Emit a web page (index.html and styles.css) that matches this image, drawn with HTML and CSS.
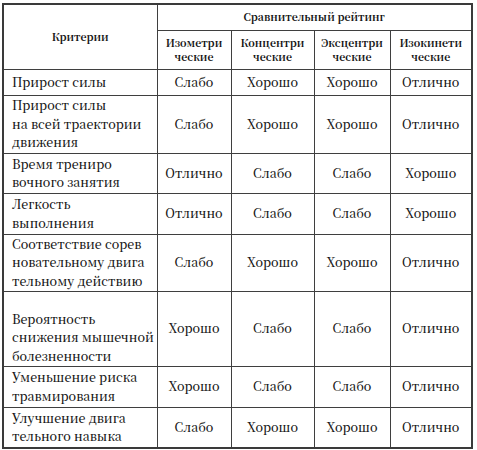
FILE: index.html
```html
<!DOCTYPE html>
<html lang="ru">
<head>
<meta charset="utf-8">
<link rel="stylesheet" href="styles.css">
</head>
<body>
<table class="rating">
  <colgroup>
    <col class="c-crit">
    <col class="c-iso">
    <col class="c-con">
    <col class="c-exc">
    <col class="c-kin">
  </colgroup>
  <thead>
    <tr class="r-top">
      <th rowspan="2" class="crit-head">Критерии</th>
      <th colspan="4" class="group-head">Сравнительный рейтинг</th>
    </tr>
    <tr class="r-sub">
      <th>Изометри<br>ческие</th>
      <th>Концентри<br>ческие</th>
      <th>Эксцентри<br>ческие</th>
      <th>Изокинети<br>ческие</th>
    </tr>
  </thead>
  <tbody>
    <tr class="r1">
      <td class="crit">Прирост силы</td>
      <td>Слабо</td><td>Хорошо</td><td>Хорошо</td><td>Отлично</td>
    </tr>
    <tr class="r3">
      <td class="crit">Прирост силы<br>на всей траектории<br>движения</td>
      <td>Слабо</td><td>Хорошо</td><td>Хорошо</td><td>Отлично</td>
    </tr>
    <tr class="r2">
      <td class="crit">Время трениро<br>вочного занятия</td>
      <td>Отлично</td><td>Слабо</td><td>Слабо</td><td>Хорошо</td>
    </tr>
    <tr class="r2b">
      <td class="crit">Легкость<br>выполнения</td>
      <td>Отлично</td><td>Слабо</td><td>Слабо</td><td>Хорошо</td>
    </tr>
    <tr class="r3b">
      <td class="crit">Соответствие сорев<br>новательному двига<br>тельному действию</td>
      <td>Слабо</td><td>Хорошо</td><td>Хорошо</td><td>Отлично</td>
    </tr>
    <tr class="r4">
      <td class="crit low">Вероятность<br>снижения мышечной<br>болезненности</td>
      <td>Хорошо</td><td>Слабо</td><td>Слабо</td><td>Отлично</td>
    </tr>
    <tr class="r2b">
      <td class="crit">Уменьшение риска<br>травмирования</td>
      <td>Хорошо</td><td>Слабо</td><td>Слабо</td><td>Отлично</td>
    </tr>
    <tr class="r2b">
      <td class="crit">Улучшение двига<br>тельного навыка</td>
      <td>Слабо</td><td>Хорошо</td><td>Хорошо</td><td>Отлично</td>
    </tr>
  </tbody>
</table>
</body>
</html>
```

FILE: styles.css
```css
html, body {
  margin: 0;
  padding: 0;
  background: #ffffff;
}

body {
  padding: 3px 0 0 2px;
}

.rating {
  border-collapse: collapse;
  table-layout: fixed;
  width: 469px;
  border: 2px solid #3a3a3a;
  font-family: "Noto Serif CJK SC", "Liberation Serif", serif;
  color: #141414;
}

.c-crit { width: 154px; }
.c-iso { width: 74px; }
.c-con { width: 83px; }
.c-exc { width: 76px; }
.c-kin { width: 82px; }

.rating th,
.rating td {
  border: 1px solid #3f3f3f;
  padding: 0;
  text-align: center;
  vertical-align: middle;
  white-space: nowrap;
}

.rating th {
  font-size: 10.5px;
  font-weight: bold;
  line-height: 14px;
}

.crit-head {
  font-size: 11px;
}

.group-head {
  padding-left: 2px;
}

.rating td {
  font-size: 12.5px;
  font-weight: 500;
  line-height: 18.5px;
}

.rating td.crit {
  text-align: left;
  padding-left: 8px;
}

.rating td.low {
  padding-top: 18px;
}

.r-top { height: 26px; }
.r-sub { height: 39px; }
.r1 { height: 26px; }
.r3 { height: 58px; }
.r2 { height: 40px; }
.r2b { height: 41px; }
.r3b { height: 57px; }
.r4 { height: 75px; }
```
